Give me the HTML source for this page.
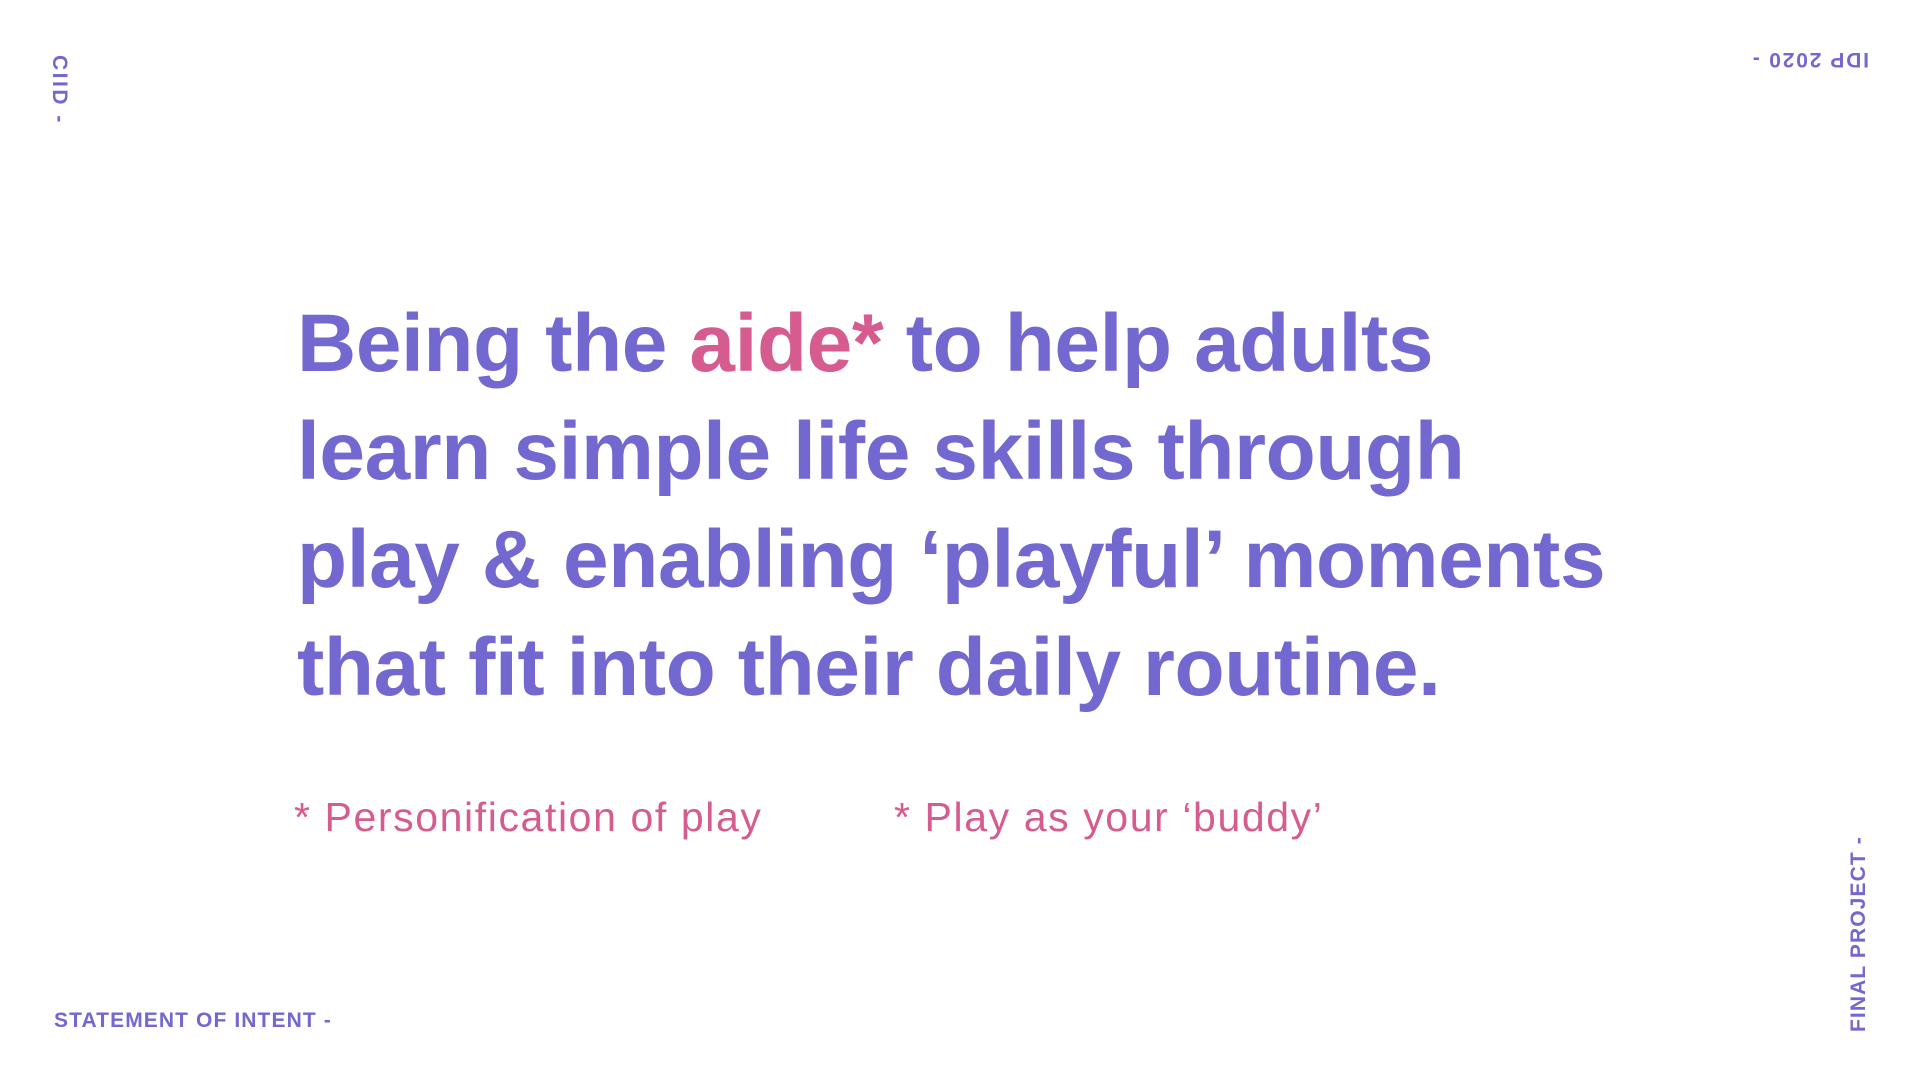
<!DOCTYPE html>
<html><head><meta charset="utf-8"><style>
html,body{margin:0;padding:0;width:1920px;height:1080px;background:#fff;overflow:hidden}
body{font-family:"Liberation Sans",sans-serif;color:#7367d0;position:relative}
.main{position:absolute;left:297px;top:290px;font-weight:bold;font-size:82px;line-height:108px;letter-spacing:-0.4px;white-space:nowrap}
.pk{color:#d65b8f}
.fn{position:absolute;top:792px;font-size:41px;letter-spacing:1.6px;color:#d65b8f;white-space:nowrap;line-height:50px}
.sm{position:absolute;font-weight:bold;font-size:21px;white-space:nowrap;line-height:24px}
</style></head><body>
<div class="main">Being the <span class="pk">aide*</span> to help adults<br>learn simple life skills through<br>play &amp; enabling ‘playful’ moments<br>that fit into their daily routine.</div>
<div class="fn" style="left:294px">* Personification of play</div>
<div class="fn" style="left:894px">* Play as your ‘buddy’</div>
<div class="sm" style="left:54px;top:1009px;letter-spacing:1.1px">STATEMENT OF INTENT -</div>
<div class="sm" style="left:47px;top:55px;letter-spacing:2.5px;transform-origin:0 0;transform:translate(24px,0) rotate(90deg)">CIID -</div>
<div class="sm" style="left:1751px;top:47px;letter-spacing:1.8px;transform:rotate(180deg)">IDP 2020 -</div>
<div class="sm" style="left:1847px;top:1032px;letter-spacing:1.1px;transform-origin:0 0;transform:rotate(-90deg)">FINAL PROJECT -</div>
</body></html>
